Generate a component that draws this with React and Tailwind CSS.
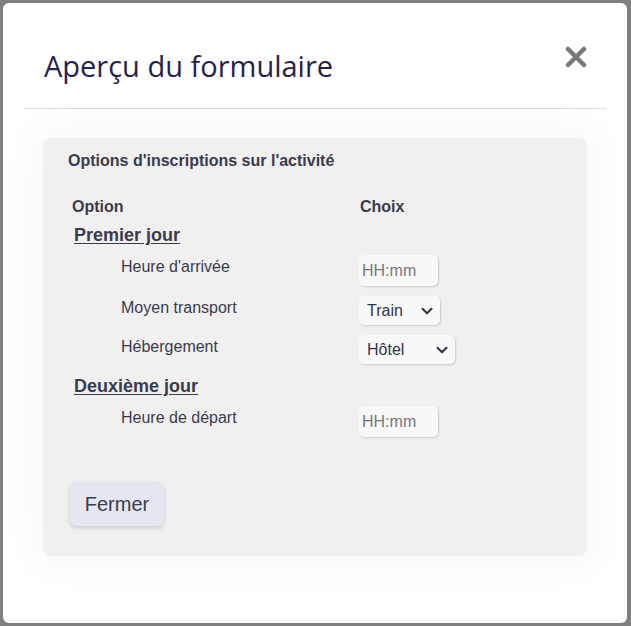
import { ChevronDown } from 'lucide-react';

const days = [
  {
    title: 'Premier jour',
    rows: [
      { label: "Heure d'arrivée", kind: 'time' },
      { label: 'Moyen transport', kind: 'select', value: 'Train', width: 'w-[81px]' },
      { label: 'Hébergement', kind: 'select', value: 'Hôtel', width: 'w-[96px]' },
    ],
  },
  {
    title: 'Deuxième jour',
    rows: [{ label: 'Heure de départ', kind: 'time' }],
  },
];

function Field({ row }) {
  if (row.kind === 'time') {
    return (
      <input
        type="text"
        placeholder="HH:mm"
        className="w-[79px] h-[31px] rounded-[5px] bg-[#f8f8f8] px-[3px] text-[16px] text-[#333] placeholder:text-[#777] shadow-[1px_1px_2px_rgba(0,0,0,0.15)] outline-none"
      />
    );
  }
  return (
    <div className={`relative ${row.width} h-[29px]`}>
      <select
        defaultValue={row.value}
        className="w-full h-full appearance-none rounded-[5px] bg-[#f8f8f8] pl-[8px] text-[16px] text-[#333347] shadow-[1px_1px_2px_rgba(0,0,0,0.15)] outline-none"
      >
        <option>{row.value}</option>
      </select>
      <ChevronDown
        size={18}
        strokeWidth={2.8}
        className="absolute right-[4px] top-[6px] text-[#333347] pointer-events-none"
      />
    </div>
  );
}

export default function App() {
  return (
    <div className="w-[631px] h-[626px] bg-[#808080] p-[3px] pr-[4px]">
      <div className="h-full bg-white rounded-[6px] flex flex-col">
        <div className="mx-[21px] flex items-center justify-between pl-[20px] pr-[19px] pt-[43px] pb-[22px] border-b border-[#dedee2]">
          <h2 className="text-[29px] leading-[40px] text-[#28224a] font-['Open_Sans',sans-serif] tracking-[0px]">
            Aperçu du formulaire
          </h2>
          <svg width="22" height="22" viewBox="0 0 22 22" className="mt-[-18px]">
            <path d="M3 3 L19 19 M19 3 L3 19" stroke="#777" strokeWidth="4.5" strokeLinecap="round" />
          </svg>
        </div>

        <div className="mx-[40px] mt-[29px] rounded-[8px] bg-[#f0f0f0] shadow-[0_0_40px_10px_rgba(0,0,0,0.03)] font-['Liberation_Sans',Arial,sans-serif] text-[#3b3b4d] px-[25px] pt-[13px] pb-[30px]">
          <div className="text-[16px] font-bold leading-[20px]">Options d'inscriptions sur l'activité</div>

          <div className="mt-[26px] pl-[4px] flex text-[16px] font-bold leading-[20px]">
            <div className="w-[288px]">Option</div>
            <div>Choix</div>
          </div>

          <div className="pl-[4px]">
            {days.map((day, i) => (
              <div key={day.title} className={i > 0 ? 'mt-[4px]' : ''}>
                <div className="pl-[2px] pt-[6px] text-[18px] font-bold underline underline-offset-[2px] leading-[24px]">
                  {day.title}
                </div>
                <div className="flex flex-col gap-[10px] mt-[8px]">
                  {day.rows.map(row => (
                    <div key={row.label} className="flex items-start">
                      <div className="w-[287px] pl-[49px] pt-[2px] text-[16px] leading-[20px]">{row.label}</div>
                      <Field row={row} />
                    </div>
                  ))}
                </div>
              </div>
            ))}
          </div>

          <button className="mt-[45px] ml-[2px] w-[94px] h-[44px] rounded-[6px] bg-[#e4e6f0] text-[20px] text-[#3b3b4d] shadow-[0_2px_4px_rgba(0,0,0,0.15)]">
            Fermer
          </button>
        </div>
      </div>
    </div>
  );
}
